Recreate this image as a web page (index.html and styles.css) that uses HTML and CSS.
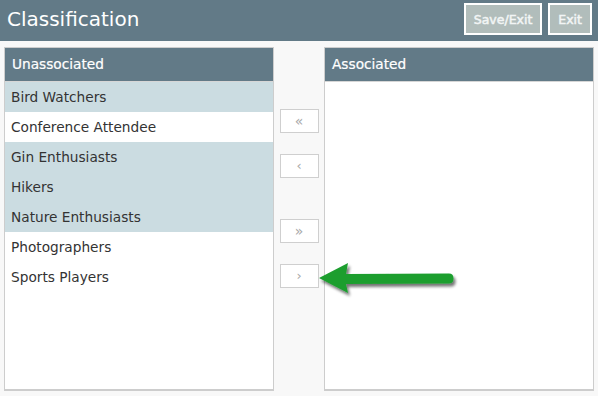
FILE: index.html
```html
<!DOCTYPE html>
<html lang="en">
<head>
    <meta charset="UTF-8">
    <meta name="viewport" content="width=device-width, initial-scale=1.0">
    <title>Classification</title>
    <link rel="stylesheet" href="styles.css">
</head>
<body>
    <div class="topbar">
        <h1>Classification</h1>
        <div class="actions">
            <button class="action-btn">Save/Exit</button>
            <button class="action-btn">Exit</button>
        </div>
    </div>

    <div class="picker">
        <!-- Unassociated list -->
        <div class="panel">
            <div class="panel-head">Unassociated</div>
            <ul class="items">
                <li class="selected">Bird Watchers</li>
                <li>Conference Attendee</li>
                <li class="selected">Gin Enthusiasts</li>
                <li class="selected">Hikers</li>
                <li class="selected">Nature Enthusiasts</li>
                <li>Photographers</li>
                <li>Sports Players</li>
            </ul>
        </div>

        <!-- Move buttons -->
        <div class="moves">
            <button class="move-btn">&laquo;</button>
            <button class="move-btn move-one">&lsaquo;</button>
            <button class="move-btn move-all">&raquo;</button>
            <button class="move-btn move-one">&rsaquo;</button>
        </div>

        <!-- Associated list -->
        <div class="panel">
            <div class="panel-head">Associated</div>
            <ul class="items"></ul>
        </div>
    </div>

    <svg class="callout" width="150" height="45" viewBox="310 255 150 45">
        <defs>
            <filter id="drop" x="-20%" y="-40%" width="140%" height="180%">
                <feGaussianBlur in="SourceAlpha" stdDeviation="1.6"/>
                <feOffset dx="2" dy="3" result="blur"/>
                <feComponentTransfer><feFuncA type="linear" slope="0.55"/></feComponentTransfer>
                <feMerge><feMergeNode/><feMergeNode in="SourceGraphic"/></feMerge>
            </filter>
        </defs>
        <path filter="url(#drop)" fill="#1c9e2f"
              d="M319 278 L348 263 L346 274 L449 273.5 Q453.5 273.5 453.5 278.5 Q453.5 283.5 449 283.5 L346 284 L348 293 Z"/>
    </svg>
</body>
</html>
```

FILE: styles.css
```css
body {
    margin: 0;
    background: #f8f8f8;
    font-family: "DejaVu Sans", Verdana, sans-serif;
    width: 598px;
    height: 396px;
    overflow: hidden;
}
.topbar {
    display: flex;
    justify-content: space-between;
    align-items: flex-start;
    height: 41px;
    padding: 3px 6px 0 7px;
    box-sizing: border-box;
    background: #627a87;
}
.topbar h1 {
    margin: 0;
    padding-top: 3px;
    color: #fff;
    font-size: 20px;
    font-weight: normal;
    line-height: 26px;
}
.actions {
    display: flex;
    gap: 6px;
}
.action-btn {
    height: 32px;
    padding: 0 8px;
    border: 2px solid #fff;
    background: #b1bdbb;
    color: #f2f5f5;
    font-family: inherit;
    font-size: 12.5px;
    -webkit-text-stroke: 0.5px #f2f5f5;
}
.picker {
    display: flex;
    padding: 6px 4px 0;
}
.panel {
    width: 270px;
    height: 344px;
    box-sizing: border-box;
    border: 1px solid #cdcdcd;
    border-bottom-width: 2px;
    background: #fff;
}
.panel-head {
    height: 33px;
    line-height: 33px;
    padding-left: 7px;
    background: #627a87;
    border-bottom: 1px solid #d6d6d6;
    color: #fff;
    font-size: 13.7px;
    -webkit-text-stroke: 0.2px #fff;
}
.items {
    list-style: none;
    margin: 0;
    padding: 0;
}
.items li {
    height: 30px;
    line-height: 30px;
    padding-left: 6px;
    color: #333;
    font-size: 13.7px;
}
.items li.selected {
    background: #cbdce1;
}
.moves {
    width: 50px;
    display: flex;
    flex-direction: column;
    align-items: center;
    padding-top: 62px;
}
.move-btn {
    width: 39px;
    height: 24px;
    margin-bottom: 21px;
    padding: 0;
    border: 1px solid #cfcfcf;
    background: #fff;
    color: #a8a8a8;
    font-family: inherit;
    font-size: 14px;
    line-height: 20px;
}
.move-btn.move-one {
    font-size: 13px;
}
.move-btn:nth-child(2) {
    margin-bottom: 41px;
}
.callout {
    position: absolute;
    left: 310px;
    top: 255px;
}
```
